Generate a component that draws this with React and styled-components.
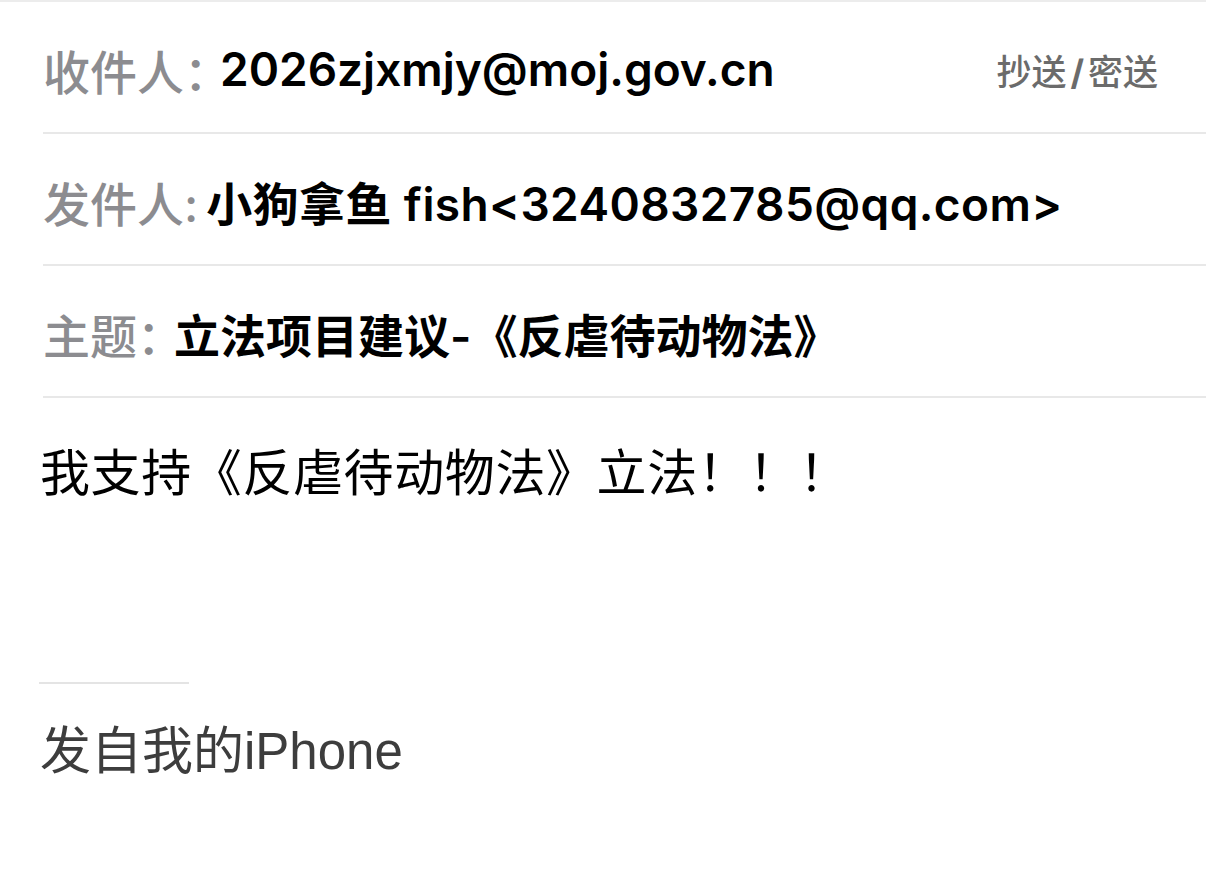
import React from 'react'
import styled, { createGlobalStyle } from 'styled-components'

const GlobalStyle = createGlobalStyle`
  html, body {
    margin: 0;
    padding: 0;
    background: #fff;
  }
  body {
    font-family: "Inter", "Noto Sans CJK SC", sans-serif;
    -webkit-font-smoothing: antialiased;
  }
`

const Page = styled.div`
  width: 1206px;
  height: 880px;
  overflow: hidden;
  background: #fff;
  border-top: 2px solid #ececec;
  box-sizing: border-box;
`

const Header = styled.div`
  padding-left: 43px;
`

const Row = styled.div`
  display: flex;
  align-items: center;
  height: 132px;
  border-bottom: 2px solid #e8e8e8;
  padding-top: 4px;
  box-sizing: border-box;
  white-space: nowrap;
`

const Label = styled.span`
  color: #8c8c90;
  font-size: 47px;
  font-weight: 500;
  margin-right: ${p => p.$gap || 0}px;
`

const Value = styled.span`
  color: #000;
  font-size: 46px;
  font-weight: 600;
  letter-spacing: ${p => p.$track || 0}px;
  flex: 1;
`

const CcLink = styled.span`
  color: #6b6b6b;
  font-size: 35px;
  font-weight: 500;
  margin-right: 48px;
`

const Slash = styled.span`
  margin: 0 4px;
  font-weight: 700;
`

const Body = styled.div`
  padding: 41px 0 0 40px;
  font-size: 50px;
  line-height: 60px;
  letter-spacing: 0.6px;
  color: #000;
  font-family: "Noto Sans CJK SC", sans-serif;
`

const Rule = styled.div`
  width: 150px;
  height: 2px;
  background: #e4e4e4;
  margin: 183px 0 0 39px;
`

const Signature = styled.div`
  padding: 38px 0 0 40px;
  font-size: 51px;
  line-height: 60px;
  color: #3d3d3d;
  font-family: "Liberation Sans", "Noto Sans CJK SC", sans-serif;
`

const App = () => (
  <>
    <GlobalStyle />
    <Page>
      <Header>
        <Row>
          <Label $gap={-11}>收件人：</Label>
          <Value>2026zjxmjy@moj.gov.cn</Value>
          <CcLink>抄送<Slash>/</Slash>密送</CcLink>
        </Row>
        <Row>
          <Label $gap={8}>发件人:</Label>
          <Value $track={0.4}>小狗拿鱼 fish&lt;3240832785@qq.com&gt;</Value>
        </Row>
        <Row>
          <Label $gap={-10}>主题：</Label>
          <Value>立法项目建议-《反虐待动物法》</Value>
        </Row>
      </Header>
      <Body>我支持《反虐待动物法》立法！！！</Body>
      <Rule />
      <Signature>发自我的iPhone</Signature>
    </Page>
  </>
)

export default App
